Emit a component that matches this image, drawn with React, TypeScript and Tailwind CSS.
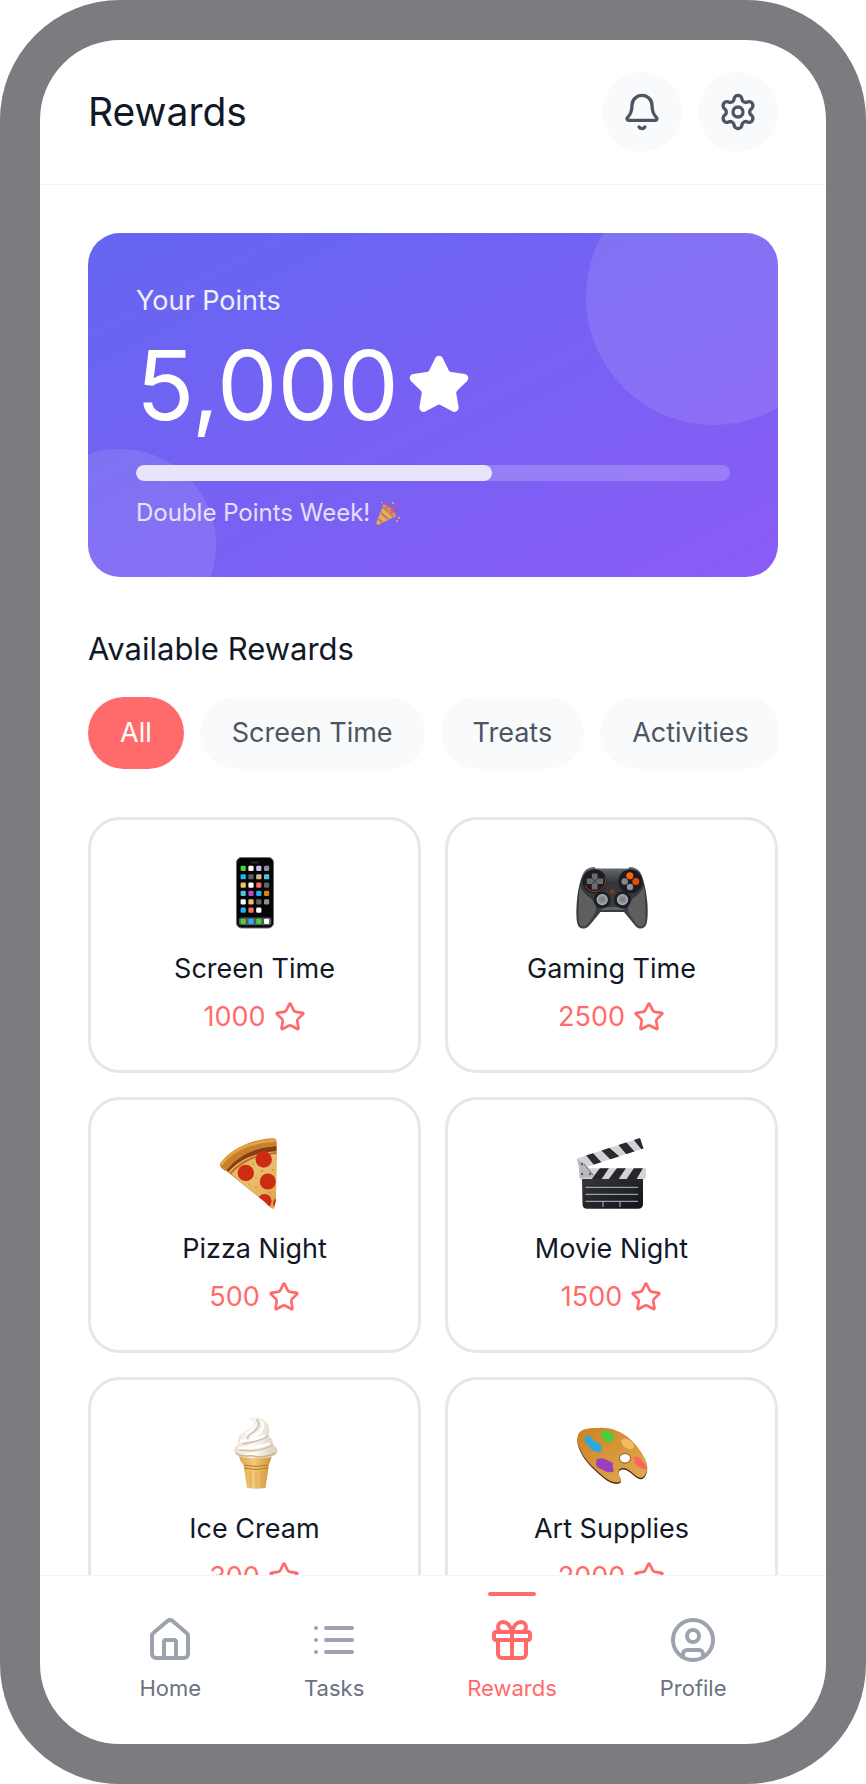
import { useState } from 'react';
import type { ReactNode } from 'react';

// Libs
import { Bell, CircleUser, Gift, House, Settings, Star } from 'lucide-react';
import clsx from 'clsx';

const PHONE_ROWS = [
  ['#4cd13c', '#ffffff', '#c5bdf5', '#8e8e99'],
  ['#25b2ef', '#5f6269', '#d6ba85', '#4fc3dd'],
  ['#f2bd6a', '#ffffff', '#ff6b5e', '#5f6269'],
  ['#4fc3dd', '#b14bd1', '#25b2ef', '#d67f1c'],
  ['#ffffff', '#f2bd6a', '#5f6269', '#8e8e99'],
  ['#25b2ef', '#ff6b5e', '#ffffff'],
];

const DOCK = ['#4cd13c', '#25b2ef', '#4cd13c', '#ffffff'];

function PhoneArt() {
  return (
    <svg className="size-18" viewBox="0 0 72 72" aria-hidden="true">
      <rect x="17.5" y=".5" width="37" height="70.5" rx="5" fill="#050505" stroke="#6b7280" />
      <rect x="32" y="4.6" width="8" height="1.8" rx=".9" fill="#26263a" />
      {PHONE_ROWS.map((row, y) => row.map((color, x) => <rect key={`${x}-${y}`} x={21.6 + x * 7.8} y={8.8 + y * 8.35} width="5.2" height="5.2" rx="1.2" fill={color} />))}
      <rect x="19.8" y="60.6" width="32.6" height="7.6" rx="2.2" fill="#55565a" />
      {DOCK.map((color, x) => (
        <rect key={x} x={21.6 + x * 7.8} y="61.8" width="5.2" height="5.2" rx="1.2" fill={color} />
      ))}
    </svg>
  );
}

function ControllerArt() {
  return (
    <svg className="size-18" viewBox="0 0 72 72" aria-hidden="true">
      <defs>
        <linearGradient id="pad" x1="0" y1="0" x2="0" y2="1">
          <stop offset="0" stopColor="#6b6e78" />
          <stop offset=".25" stopColor="#33353b" />
          <stop offset="1" stopColor="#3f4144" />
        </linearGradient>
        <radialGradient id="stick">
          <stop offset="0" stopColor="#777985" />
          <stop offset=".6" stopColor="#8b8d99" />
          <stop offset="1" stopColor="#b6b8c2" />
        </radialGradient>
      </defs>
      <path
        d="M8 15C11 11 15 10 18.500 10L20 11.500H52L53.500 10C57 10 61 11 64 15C67 20 70 31 71.300 45C72 54 71.800 61 71 65C70 70 67 71.500 64.500 71.500C61 71.500 59.500 69 57 66L48 55H24.500L15.500 66C13 69 11 71.500 7.500 71.500C4 71.500 2 70 1 65C.3 60 .2 54 .8 45C2 31 5 20 8 15Z"
        fill="url(#pad)"
      />
      <path d="M4 29C8 39 16 40 19 47C21 52 20 55 16 61C12 67 10 69.500 7 69.500C4 69.500 2.500 66 2.500 60C2.500 50 2.700 38 4 29Z" fill="#5c5f5e" />
      <path d="M68 29C64 39 56 40 53 47C51 52 52 55 56 61C60 67 62 69.500 65 69.500C68 69.500 69.500 66 69.500 60C69.500 50 69.300 38 68 29Z" fill="#5c5f5e" />
      <path d="M25 53H48L46 50H27Z" fill="#62646b" />
      <circle cx="18.500" cy="24.300" r="12" fill="#1c1d20" />
      <path d="M28.800 20A10.500 10.500 0 1 1 9 28" fill="none" stroke="#a83a0c" />
      <path d="M15.900 16.500H21.500V21.500H27V27H21.500V32.500H15.900V27H10.800V21.500H15.900Z" fill="#686c73" />
      <path d="M15.900 21.500L21.500 27M21.500 21.500L15.900 27" stroke="#34363b" />
      <circle cx="54.500" cy="24.300" r="12" fill="#1c1d20" />
      <circle cx="53.800" cy="18.800" r="3.500" fill="#f9660c" />
      <circle cx="59.800" cy="24.600" r="3.500" fill="#e84a08" />
      <circle cx="48.700" cy="24.500" r="3.200" fill="#858894" />
      <circle cx="54" cy="30" r="3.200" fill="#8f929e" />
      <circle cx="26.200" cy="43" r="8.500" fill="#1e1f22" />
      <circle cx="46.500" cy="43" r="8.500" fill="#1e1f22" />
      <circle cx="26.200" cy="42.600" r="5.600" fill="url(#stick)" />
      <circle cx="46.500" cy="42.600" r="5.600" fill="url(#stick)" />
      <circle cx="36.200" cy="34.600" r="2.300" fill="#8e3510" />
    </svg>
  );
}

function PizzaArt() {
  return (
    <svg className="size-18" viewBox="0 0 72 72" aria-hidden="true">
      <defs>
        <linearGradient id="cheese" x1="0" y1="0" x2="1" y2="1">
          <stop offset="0" stopColor="#dda34a" />
          <stop offset=".5" stopColor="#e9c070" />
          <stop offset="1" stopColor="#d99b40" />
        </linearGradient>
        <clipPath id="slice">
          <path d="M7.500 33C19 19 36 10 57.500 9L57 57C56.800 64 56 70 54.500 71.500C53 72 50 69.500 47 66Z" />
        </clipPath>
      </defs>
      <path d="M1 27C10 13 31 2 54.500 1.200C57 1.200 57.800 3 57.700 6L57 57C56.800 64 56 70 54.500 71.500C53 72 50 69.500 47 66L8 34.500C4 33 .5 30 1 27Z" fill="#c9802b" />
      <g clipPath="url(#slice)">
        <rect width="72" height="72" fill="url(#cheese)" />
        <path d="M5 36C18 19 36 12.500 60 11.500" fill="none" stroke="#8b3d12" strokeWidth="5.500" />
        <path d="M10 38C23 23 38 17 60 16" fill="none" stroke="#ca6d22" strokeWidth="2" />
        <circle cx="44.700" cy="22.500" r="8.200" fill="#cc2d12" />
        <circle cx="26.800" cy="36" r="8.200" fill="#cc2d12" />
        <circle cx="48.800" cy="44.500" r="8" fill="#cc2d12" />
        <circle cx="45.600" cy="64" r="7" fill="#cc2d12" />
        <circle cx="59" cy="66" r="5" fill="#cc2d12" />
        <g fill="#c97c24">
          <circle cx="37" cy="50" r=".8" />
          <circle cx="34" cy="27" r=".8" />
          <circle cx="37" cy="41" r=".7" />
          <circle cx="43" cy="34" r=".9" />
          <circle cx="54" cy="33" r=".8" />
          <circle cx="51" cy="56" r=".8" />
          <circle cx="30" cy="47" r=".6" />
        </g>
      </g>
      <path d="M2.500 27C12 14 31 4.500 55.500 3.500" fill="none" stroke="#e3a248" strokeWidth="3" strokeLinecap="round" />
    </svg>
  );
}

function ClapperArt() {
  return (
    <svg className="size-18" viewBox="0 0 72 72" aria-hidden="true">
      <defs>
        <clipPath id="arm">
          <path d="M.8 21.500L64 1L67.500 11.500L12 29.500L3 30Z" />
        </clipPath>
        <clipPath id="bar">
          <path d="M4 31.300H70V40L68 42.500H4Z" />
        </clipPath>
        <linearGradient id="slate" x1="0" y1="0" x2="1" y2="1">
          <stop offset="0" stopColor="#35373b" />
          <stop offset="1" stopColor="#121316" />
        </linearGradient>
      </defs>
      <g clipPath="url(#arm)">
        <rect width="72" height="34" fill="#d2d3d8" />
        <path d="M9 17L16 15L27 27L19 29ZM25 13L33 10.500L44 20L35 23ZM42 7.500L50 5L59 15L51 18ZM57 2L65 0L72 10L66 13Z" fill="#292a2d" />
      </g>
      <g clipPath="url(#bar)">
        <rect y="30" width="72" height="14" fill="#d2d3d8" />
        <path d="M24 31H33L25 43H15ZM41 31H50L42 43H32ZM58 31H67L60 43H50Z" fill="#252629" />
      </g>
      <path d="M1 22L9 27L18 38L17 40.500L3.500 41L3 30Z" fill="#b8bac0" />
      <path d="M8 27L17 38" stroke="#75777e" />
      <circle cx="6" cy="27" r="1.200" fill="#5b5d63" />
      <circle cx="6" cy="37" r="1.200" fill="#5b5d63" />
      <circle cx="14" cy="37" r="1.200" fill="#5b5d63" />
      <path d="M6 42H67V67Q67 71.700 62 71.700H11Q6.500 71.700 6.500 67Z" fill="url(#slate)" />
      <path d="M9.500 50.300H62M9.500 57.300H62M9.500 64.300H62M27 64.300V70M44 64.300V70" stroke="#b8bcc7" strokeWidth="1" />
    </svg>
  );
}

function IceCreamArt() {
  return (
    <svg className="size-18" viewBox="0 0 72 72" aria-hidden="true">
      <defs>
        <linearGradient id="cone" x1="0" y1="0" x2="1" y2="0">
          <stop offset="0" stopColor="#dda03d" />
          <stop offset=".45" stopColor="#f2ca7d" />
          <stop offset="1" stopColor="#cd8d2d" />
        </linearGradient>
        <linearGradient id="cream" x1="0" y1="0" x2="1" y2="0">
          <stop offset="0" stopColor="#e8dfd3" />
          <stop offset=".4" stopColor="#ffffff" />
          <stop offset="1" stopColor="#d9cbb8" />
        </linearGradient>
      </defs>
      <path d="M18.500 35H54L51 45L49.500 48V51L46.500 71Q37 72.500 28 71L25 51V48L22 45Z" fill="url(#cone)" />
      <path d="M24.500 48Q37 51 49.500 48M25 51Q37 54 49 51" fill="none" stroke="#b97825" />
      <path d="M31 54L32 70M37 54V70M43 54L42 70" fill="none" stroke="#dca850" />
      <path
        d="M31 2.500C37-.5 50 2 50 14C50 17 49 18 48.500 19C53 21 54 25 53.500 28C58 30 59.500 34 57.500 36C54 41 46 41 36 41C27 41 19 40 16.500 36C14 32 17 29 20.500 27C18 23 20 18 25.500 15.500C28 13 35 10 35.500 7C36 4.500 34 3 31 2.500Z"
        fill="url(#cream)"
        stroke="#e4d8ca"
        strokeWidth=".6"
      />
      <path d="M38 3C42 8 38 13 33 16C29 18.500 27 21 30 24M48.500 19C43 23 36 25 24 27M53.500 28C45 33 35 35 21 33" fill="none" stroke="#d6c5af" strokeWidth="2" strokeLinecap="round" />
      <path d="M43 5C46 12 40 17 35 20M22 24C30 24 39 22 45 19M20 31C31 31 42 30 50 27" fill="none" stroke="#fff" strokeWidth="2.500" strokeLinecap="round" />
      <path d="M17 36C22 41 30 38 34 39C42 41 48 40 57 36" fill="none" stroke="#cfb28b" strokeWidth="1.500" />
    </svg>
  );
}

function PaletteArt() {
  const outline =
    'M22 11C35 10 46 15 54 22C62 29 66 36 70 44C73 51 70 59 66.500 60.500C61 62 57 55 51 52C47 50 42.500 51 42.500 55C42.500 59 46 61 44.500 64C42 67 34 65 28 60C20 53 12 46 7 38C2 30-.5 22 3 16C7 11 15 11 22 11Z';
  return (
    <svg className="size-18" viewBox="0 0 72 72" aria-hidden="true">
      <defs>
        <linearGradient id="wood" x1="0" y1="0" x2="1" y2="1">
          <stop offset="0" stopColor="#cd8121" />
          <stop offset="1" stopColor="#e1ab54" />
        </linearGradient>
      </defs>
      <path d={outline} fill="#4a2a10" transform="translate(0 1.500)" />
      <path d={outline} fill="url(#wood)" />
      <ellipse cx="49" cy="41.300" rx="5.500" ry="4.800" fill="#fff" stroke="#8d561b" />
      <path d="M24 15Q30 12 36 16Q40 20 36 24Q31 28 27 22Q26 18 24 15Z" fill="#4bcb3e" />
      <path d="M9 19Q14 17 17 23L24 27L26 32Q24 37 18 34Q13 32 12 27L9 26Z" fill="#28a9e1" />
      <path d="M45 23Q51 20 57 26Q60 31 55 32Q49 32 46 27Z" fill="#f0bd61" />
      <path d="M58 40Q63 38 66 44L71 50Q71 54 65 51Q60 50 59 46Z" fill="#fb675c" />
      <path d="M21 42Q26 40 31 43L37 46Q36 50 38 54Q33 57 27 53Q19 50 20 46Z" fill="#9c3fbc" />
    </svg>
  );
}

function PartyPopper() {
  return (
    <svg className="size-6" viewBox="0 0 24 24" role="img" aria-label="Party popper">
      <path d="M7.500 3.500C12 4 18 10 20 15L2 24Q0 24 .5 21.500Z" fill="#e2ae4c" />
      <path d="M5 12L12.500 18.500M2.500 18L6.500 21.500M7 6L17 15.500" stroke="#b45a94" strokeWidth="1.200" />
      <ellipse cx="14" cy="9.500" rx="8" ry="2.300" transform="rotate(44 14 9.500)" fill="#cf9350" />
      <path d="M11 7Q13 3 10 1M14 10Q20 7 23 2M15 12Q19 9 23 11" fill="none" stroke="#dd4590" strokeWidth="1.200" />
      <path d="M1 1.500L4 4M20 10L24 9" stroke="#4a73e8" strokeWidth="1.500" />
      <g fill="#f5b63c">
        <circle cx="17" cy="2" r="1" />
        <circle cx="23" cy="17" r="1" />
        <circle cx="6" cy="1.500" r=".8" />
      </g>
      <circle cx="21" cy="20" r="1" fill="#f0b04a" />
    </svg>
  );
}

function ListIcon({ className }: { className?: string }) {
  return (
    <svg className={className} viewBox="0 0 24 24" fill="none" stroke="currentColor" strokeWidth="2" strokeLinecap="round" aria-hidden="true">
      <path d="M8 6h13M8 12h13M8 18h13M3 6h.01M3 12h.01M3 18h.01" />
    </svg>
  );
}

interface Reward {
  name: string;
  cost: number;
  art: ReactNode;
}

const REWARDS: Reward[] = [
  { name: 'Screen Time', cost: 1000, art: <PhoneArt /> },
  { name: 'Gaming Time', cost: 2500, art: <ControllerArt /> },
  { name: 'Pizza Night', cost: 500, art: <PizzaArt /> },
  { name: 'Movie Night', cost: 1500, art: <ClapperArt /> },
  { name: 'Ice Cream', cost: 300, art: <IceCreamArt /> },
  { name: 'Art Supplies', cost: 2000, art: <PaletteArt /> },
];

const FILTERS = ['All', 'Screen Time', 'Treats', 'Activities'];

const NAV_ITEMS = [
  { label: 'Home', icon: House },
  { label: 'Tasks', icon: ListIcon },
  { label: 'Rewards', icon: Gift },
  { label: 'Profile', icon: CircleUser },
];

export default function App() {
  const [filter, setFilter] = useState('All');

  return (
    <div className="flex h-screen flex-col overflow-hidden rounded-[120px] border-[40px] border-[#7d7a80] bg-white font-['Inter',sans-serif] text-[#111827]">
      {/* Header */}
      <header className="flex shrink-0 items-center justify-between border-b border-gray-100 px-12 py-8">
        <h1 className="text-[39px] leading-[60px]">Rewards</h1>
        <div className="flex gap-4">
          <button type="button" aria-label="Notifications" className="flex size-20 items-center justify-center rounded-full bg-gray-50 text-[#4b5563]">
            <Bell className="size-10" />
          </button>
          <button type="button" aria-label="Settings" className="flex size-20 items-center justify-center rounded-full bg-gray-50 text-[#4b5563]">
            <Settings className="size-10" />
          </button>
        </div>
      </header>

      <main className="min-h-0 flex-1 overflow-hidden px-12 pt-12">
        {/* Points */}
        <section className="relative overflow-hidden rounded-[32px] bg-linear-to-br/srgb from-[#6466f1] to-[#8a5cf6] p-12 text-white">
          <div className="absolute -top-16 -right-16 size-64 rounded-full bg-white/10" />
          <div className="absolute -bottom-16 -left-16 size-48 rounded-full bg-white/10" />
          <div className="relative">
            <p className="text-[27px] leading-10 text-white/90">Your Points</p>
            <div className="mt-4 flex items-center gap-2">
              <span className="text-8xl leading-none">5,000</span>
              <Star className="size-16 fill-current" />
            </div>
            <div className="mt-8 h-4 overflow-hidden rounded-full bg-white/20">
              <div className="h-full w-3/5 rounded-full bg-[#e8e4fb]" />
            </div>
            <p className="mt-4 flex items-center gap-1.5 text-2xl leading-8 text-white/80">
              Double Points Week!
              <PartyPopper />
            </p>
          </div>
        </section>

        {/* Filters */}
        <h2 className="mt-12 text-[31px] leading-[48px]">Available Rewards</h2>
        <div className="mt-6 flex gap-4 overflow-hidden">
          {FILTERS.map((name) => (
            <button
              key={name}
              type="button"
              aria-pressed={filter === name}
              onClick={() => setFilter(name)}
              className={clsx(
                'shrink-0 rounded-full px-8 py-4 text-[27px] leading-10 whitespace-nowrap',
                filter === name ? 'bg-[#ff6b6b] text-white' : 'bg-gray-50 text-[#4b5563]',
              )}
            >
              {name}
            </button>
          ))}
        </div>

        {/* Rewards */}
        <div className="mt-12 grid grid-cols-2 gap-6">
          {REWARDS.map((reward) => (
            <button
              key={reward.name}
              type="button"
              className="flex min-h-64 flex-col items-center justify-center rounded-[32px] border-3 border-gray-200 text-[27px] leading-10"
            >
              <span className="flex h-20 items-center">{reward.art}</span>
              <span className="mt-4">{reward.name}</span>
              <span className="mt-2 flex items-center gap-2 text-[#ff6b6b]">
                {reward.cost}
                <Star className="size-8" />
              </span>
            </button>
          ))}
        </div>
      </main>

      {/* Bottom Navigation */}
      <nav className="flex shrink-0 justify-around border-t border-gray-100 px-12 pt-4 pb-8">
        {NAV_ITEMS.map(({ label, icon: Icon }) => {
          const active = label === 'Rewards';
          return (
            <a
              key={label}
              href="#"
              aria-current={active ? 'page' : undefined}
              className={clsx('relative flex flex-col items-center gap-2 pt-6 pb-2 text-[22px] leading-8', active ? 'text-[#ff6b6b]' : 'text-[#6b7280]')}
            >
              {active && <span className="absolute top-0 h-1 w-12 rounded-full bg-[#ff6b6b]" />}
              <Icon className={clsx('size-12', !active && 'text-[#9ca3af]')} />
              {label}
            </a>
          );
        })}
      </nav>
    </div>
  );
}
